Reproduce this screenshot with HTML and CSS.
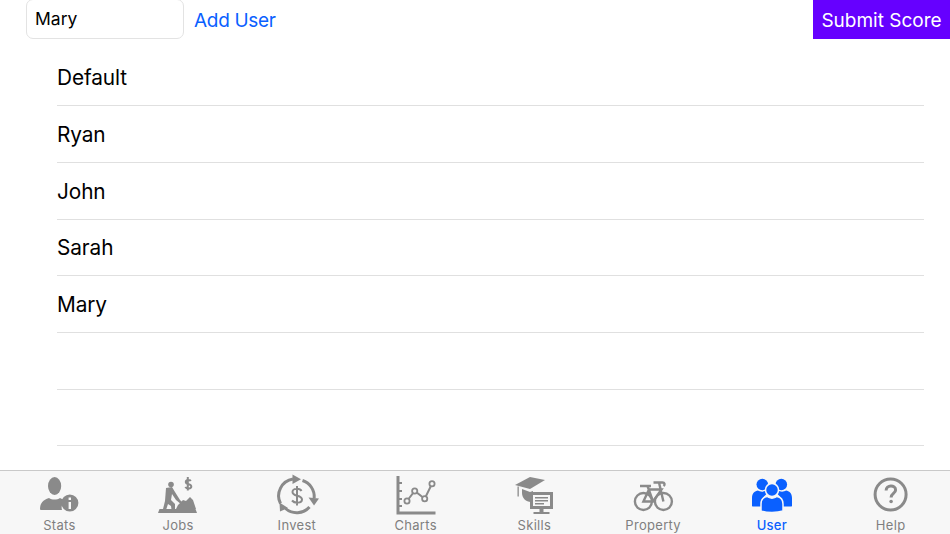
FILE: index.html
```html
<!DOCTYPE html>
<html lang="en">
<head>
<meta charset="utf-8">
<title>User</title>
<link rel="stylesheet" href="styles.css">
</head>
<body>
<div class="page">
  <header class="top">
    <div class="field">Mary</div>
    <a class="add">Add User</a>
    <a class="submit">Submit Score</a>
  </header>
  <ul class="list">
    <li class="row">Default</li>
    <li class="row">Ryan</li>
    <li class="row">John</li>
    <li class="row">Sarah</li>
    <li class="row">Mary</li>
    <li class="row"></li>
    <li class="row"></li>
  </ul>
  <nav class="tabs">
    <a class="tab">
      <svg class="icon" viewBox="0 0 48 44">
        <ellipse cx="19.6" cy="13" rx="6.6" ry="9"/>
        <path d="M5 36c0-6 3-9 9-11 3 2 8 2 11 0 2 1 4 2 5 3-3 2-4 6-3 9H7c-1 0-2 0-2-1z"/>
        <circle cx="34.8" cy="30" r="8.6"/>
        <path class="cut" d="M34.8 29v7M34.8 24.500v2.500"/>
      </svg>
      <span>Stats</span>
    </a>
    <a class="tab">
      <svg class="icon" viewBox="0 0 48 44">
        <path d="M5.500 36h36l1.500 4H4z"/>
        <path d="M24 32l5-5 3 1 4-4 3 3 3 9H22z"/>
        <circle cx="17" cy="11.500" r="2.800"/>
        <path d="M12 15l6-1 3 5 5 8 4 4-2 1-6-5-4-6-1 6 4 4 0 9h-3l-1-7-3-2-3 9H8l3-12z"/>
        <path class="line" d="M36.800 8c-1-1.500-5-1.500-5 1 0 3 5.500 1.500 5.500 4.500 0 2.500-4.500 2.500-6 .5M33.800 4v13.500"/>
      </svg>
      <span>Jobs</span>
    </a>
    <a class="tab">
      <svg class="icon" viewBox="0 0 48 44">
        <path class="line wide" d="M7.500 30.500A17 17 0 0 1 20 6"/>
        <path d="M19.500 1.500L28 6.200l-8.500 4.800z"/>
        <path class="line wide" d="M29.500 7.500A17 17 0 0 1 41.200 25"/>
        <path d="M35.500 24.500l5.500 8 5-7z"/>
        <path class="line wide" d="M36.500 34A17 17 0 0 1 12.500 35.500"/>
        <path d="M6.500 29.500l.5 9 8-3.500z"/>
        <path class="line" d="M28.500 18c-1.500-3-9-3-9 1 0 5 9.500 2.500 9.500 7.500 0 4-7.500 4-10 1M24 13v19.500"/>
      </svg>
      <span>Invest</span>
    </a>
    <a class="tab">
      <svg class="icon" viewBox="0 0 48 44">
        <path class="line wide" d="M6 3v37h37.500"/>
        <path class="line" d="M6 10h4M6 18h4M6 26h4M6 33h4"/>
        <path class="line" d="M15 28l7.700-10 10 7.700 7.300-15"/>
        <circle class="ring" cx="15" cy="28" r="2.600"/>
        <circle class="ring" cx="22.700" cy="18" r="2.600"/>
        <circle class="ring" cx="32.700" cy="25.700" r="2.600"/>
        <circle class="ring" cx="40" cy="10.700" r="2.600"/>
      </svg>
      <span>Charts</span>
    </a>
    <a class="tab">
      <svg class="icon" viewBox="0 0 48 44">
        <path d="M5 12L20 4l15 3-15 9z"/>
        <path d="M7.500 13.500h1.300v10H7.500z"/>
        <path d="M12 16l8 3 3-1v5h-2v6c-5 0-9-4-9-9z"/>
        <path d="M20 19h23v17H20zM23 22v11h17V22z"/>
        <path d="M25 24h13v1.400H25zM25 27h13v1.400H25zM25 30h9v1.400H25z"/>
        <path d="M29.500 36h4v3h6v2h-16v-2h6z"/>
      </svg>
      <span>Skills</span>
    </a>
    <a class="tab">
      <svg class="icon" viewBox="0 0 48 44">
        <circle class="spoke" cx="14.400" cy="28.500" r="8.500"/>
        <circle class="spoke" cx="34.400" cy="28.500" r="8.500"/>
        <path class="line bold" d="M14.400 28.500L20 16.500h12.500L24 28.500zM18.500 13l5.500 15.500M11 13h11M34.400 28.500L30 9.500h-5.500M30 9.500h3.500c2 0 3 2 1 3.500"/>
      </svg>
      <span>Property</span>
    </a>
    <a class="tab is-active">
      <svg class="icon" viewBox="0 0 48 44">
        <circle cx="14.300" cy="11.500" r="5.800"/>
        <circle cx="33.300" cy="11.500" r="5.800"/>
        <path d="M4 33V25c0-5 3-7 6-7.500 2 1.500 6 1.500 8 0 1 0 2 .5 3 1l-6 6c-1 3-1 6-1 9H6c-1 0-2 0-2-.5z"/>
        <path d="M44 33V25c0-5-3-7-6-7.500-2 1.500-6 1.500-8 0-1 0-2 .5-3 1l6 6c1 3 1 6 1 9h8c1 0 2 0 2-.5z"/>
        <circle class="halo" cx="24" cy="17" r="6.500"/>
        <path class="halo" d="M13 38V31c0-5 3-7 6-7.500 3 2 7 2 10 0 3 .5 6 2.500 6 7.500v7c-6 2-16 2-22 0z"/>
      </svg>
      <span>User</span>
    </a>
    <a class="tab">
      <svg class="icon" viewBox="0 0 48 44">
        <circle class="spoke thick" cx="23.600" cy="21.500" r="15.500"/>
        <path class="line wide" d="M19.100 17.500c0-6 9.500-6 9.500-.5 0 3.500-4.500 3.500-4.500 7.500"/>
        <circle cx="24.100" cy="28.500" r="1.800"/>
      </svg>
      <span>Help</span>
    </a>
  </nav>
</div>
</body>
</html>
```

FILE: styles.css
```css
* {
  box-sizing: border-box;
}

html,
body {
  margin: 0;
  padding: 0;
}

body {
  background: #ffffff;
  font-family: Inter, "Liberation Sans", sans-serif;
  color: #000000;
}

.page {
  width: 950px;
  height: 534px;
  display: flex;
  flex-direction: column;
  overflow: hidden;
}

.top {
  height: 39px;
  flex: none;
  display: flex;
  align-items: stretch;
  padding-left: 26px;
}

.field {
  width: 158px;
  height: 40px;
  margin-top: -1px;
  padding: 0 8px 1px;
  display: flex;
  align-items: center;
  background: #ffffff;
  border: 1px solid #e3e3e3;
  border-radius: 7px;
  font-size: 17.500px;
}

.add {
  margin-left: 10px;
  padding-top: 2px;
  display: flex;
  align-items: center;
  font-size: 19px;
  letter-spacing: -0.300px;
  color: #0a60ff;
}

.submit {
  margin-left: auto;
  width: 137px;
  padding-top: 2px;
  display: flex;
  align-items: center;
  justify-content: center;
  background: #6600ff;
  color: #ffffff;
  font-size: 19px;
}

.list {
  list-style: none;
  margin: 0;
  padding: 10.500px 26px 0 57px;
  flex: 1;
}

.row {
  height: 56.700px;
  display: flex;
  align-items: center;
  padding-top: 1px;
  border-bottom: 1px solid #e0e0e0;
  font-size: 20.800px;
  letter-spacing: -0.100px;
}

.tabs {
  height: 64px;
  flex: none;
  display: grid;
  grid-template-columns: repeat(8, 1fr);
  background: #f7f7f7;
  border-top: 1px solid #c9c9c9;
}

.tab {
  display: flex;
  flex-direction: column;
  align-items: center;
  padding-top: 2px;
  color: #7f7f7f;
  font-size: 13px;
  letter-spacing: 0.300px;
}

.tab span {
  margin-top: 0;
  line-height: 16px;
}

.icon {
  width: 48px;
  height: 44px;
  fill: #8a8a8a;
}

.line {
  fill: none;
  stroke: #8a8a8a;
  stroke-width: 2;
}

.wide {
  stroke-width: 3;
}

.bold {
  stroke-width: 2.400;
}

.cut {
  fill: none;
  stroke: #f7f7f7;
  stroke-width: 2.400;
}

.ring {
  fill: #f7f7f7;
  stroke: #8a8a8a;
  stroke-width: 1.800;
}

.spoke {
  fill: none;
  stroke: #8a8a8a;
  stroke-width: 2.400;
}

.thick {
  stroke-width: 3;
}

.is-active {
  color: #0a60ff;
  font-weight: 500;
}

.is-active .icon {
  fill: #0a60ff;
}

.halo {
  stroke: #f7f7f7;
  stroke-width: 1.500;
}
```
